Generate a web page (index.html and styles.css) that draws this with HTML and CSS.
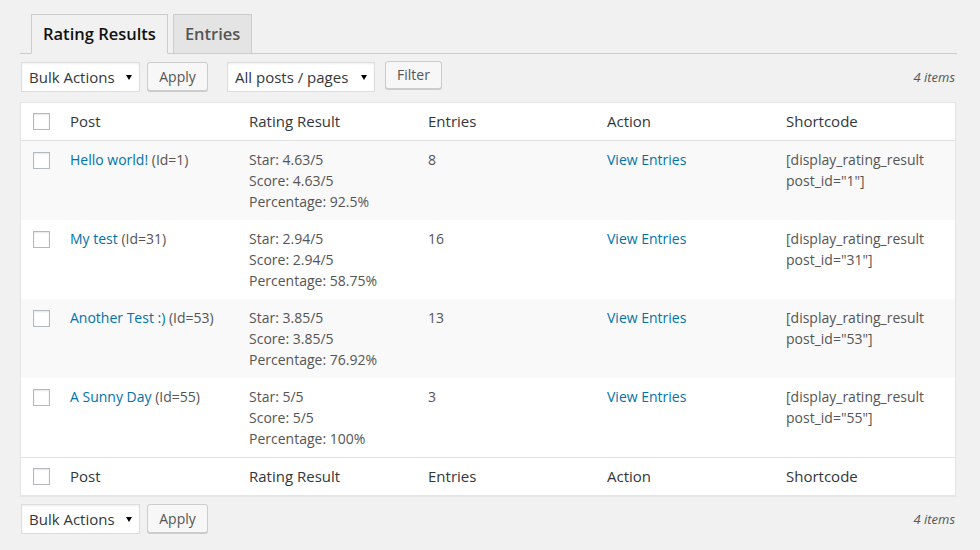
FILE: index.html
```html
<!DOCTYPE html>
<html lang="en">
<head>
<meta charset="utf-8">
<title>Rating Results</title>
<link rel="stylesheet" href="styles.css">
</head>
<body>
<div class="wrap">
  <div class="nav-tab-wrapper">
    <a class="nav-tab nav-tab-active" href="#">Rating Results</a>
    <a class="nav-tab" href="#">Entries</a>
  </div>

  <div class="tablenav top">
    <div class="actions">
      <div class="select select-bulk"><span>Bulk Actions</span><i class="caret"></i></div>
      <button class="button btn-apply" type="button">Apply</button>
    </div>
    <div class="actions actions-filter">
      <div class="select select-posts"><span>All posts / pages</span><i class="caret"></i></div>
      <button class="button btn-filter" type="button">Filter</button>
    </div>
    <div class="displaying-num">4 items</div>
  </div>

  <table class="widefat">
    <colgroup>
      <col class="col-cb">
      <col><col><col><col><col>
    </colgroup>
    <thead>
      <tr>
        <th class="check-column"><span class="checkbox"></span></th>
        <th>Post</th>
        <th>Rating Result</th>
        <th>Entries</th>
        <th>Action</th>
        <th>Shortcode</th>
      </tr>
    </thead>
    <tbody>
      <tr class="alternate">
        <td class="check-column"><span class="checkbox"></span></td>
        <td><a href="#">Hello world!</a> (Id=1)</td>
        <td>Star: 4.63/5<br>Score: 4.63/5<br>Percentage: 92.5%</td>
        <td>8</td>
        <td><a href="#">View Entries</a></td>
        <td>[display_rating_result post_id="1"]</td>
      </tr>
      <tr>
        <td class="check-column"><span class="checkbox"></span></td>
        <td><a href="#">My test</a> (Id=31)</td>
        <td>Star: 2.94/5<br>Score: 2.94/5<br>Percentage: 58.75%</td>
        <td>16</td>
        <td><a href="#">View Entries</a></td>
        <td>[display_rating_result post_id="31"]</td>
      </tr>
      <tr class="alternate">
        <td class="check-column"><span class="checkbox"></span></td>
        <td><a href="#">Another Test :)</a> (Id=53)</td>
        <td>Star: 3.85/5<br>Score: 3.85/5<br>Percentage: 76.92%</td>
        <td>13</td>
        <td><a href="#">View Entries</a></td>
        <td>[display_rating_result post_id="53"]</td>
      </tr>
      <tr>
        <td class="check-column"><span class="checkbox"></span></td>
        <td><a href="#">A Sunny Day</a> (Id=55)</td>
        <td>Star: 5/5<br>Score: 5/5<br>Percentage: 100%</td>
        <td>3</td>
        <td><a href="#">View Entries</a></td>
        <td>[display_rating_result post_id="55"]</td>
      </tr>
    </tbody>
    <tfoot>
      <tr>
        <th class="check-column"><span class="checkbox"></span></th>
        <th>Post</th>
        <th>Rating Result</th>
        <th>Entries</th>
        <th>Action</th>
        <th>Shortcode</th>
      </tr>
    </tfoot>
  </table>

  <div class="tablenav bottom">
    <div class="actions">
      <div class="select select-bulk"><span>Bulk Actions</span><i class="caret"></i></div>
      <button class="button btn-apply" type="button">Apply</button>
    </div>
    <div class="displaying-num">4 items</div>
  </div>
</div>
</body>
</html>
```
FILE: styles.css
```css
* { box-sizing: border-box; }

html, body {
  margin: 0;
  padding: 0;
  background: #f1f1f1;
}

body {
  font-family: "Open Sans", "Noto Sans", "Liberation Sans", sans-serif;
  font-size: 14px;
  color: #555;
}

.wrap {
  padding: 14px 23px 0 20px;
}

/* Tabs */
.nav-tab-wrapper {
  display: flex;
  align-items: flex-end;
  gap: 5px;
  padding-left: 11px;
  border-bottom: 1px solid #ccc;
}

.nav-tab {
  display: block;
  height: 39px;
  padding: 7px 11px;
  border: 1px solid #ccc;
  border-bottom: none;
  background: #e4e4e4;
  color: #555;
  font-size: 16.5px;
  font-weight: 600;
  line-height: 24px;
  text-decoration: none;
  white-space: nowrap;
}

.nav-tab-active {
  height: 40px;
  margin-bottom: -1px;
  background: #f1f1f1;
  border-bottom: 1px solid #f1f1f1;
  color: #111;
}

/* Table nav */
.tablenav {
  display: flex;
  align-items: flex-start;
  height: 30px;
}

.tablenav.top { margin-top: 8px; }
.tablenav.bottom { margin-top: 8px; }

.actions {
  display: flex;
  align-items: flex-start;
}

.actions + .actions { margin-left: 19px; }

.select {
  display: flex;
  align-items: center;
  justify-content: space-between;
  height: 30px;
  padding: 0 7px 0 7px;
  background: #fff;
  border: 1px solid #ddd;
  box-shadow: inset 0 1px 2px rgba(0, 0, 0, 0.07);
  color: #32373c;
  font-size: 15px;
  line-height: 28px;
}

.select-bulk { width: 119px; margin-left: 1px; }
.select-posts { width: 148px; }

.caret {
  display: block;
  width: 0;
  height: 0;
  border-top: 5px solid #000;
  border-left: 3px solid transparent;
  border-right: 3px solid transparent;
  margin-top: 1px;
}

.button {
  height: 29px;
  padding: 0 11px;
  background: #f7f7f7;
  border: 1px solid #ccc;
  border-radius: 3px;
  box-shadow: 0 1px 0 #ccc;
  color: #555;
  font-family: inherit;
  font-size: 14px;
  line-height: 26px;
  cursor: pointer;
}

.btn-apply { margin-left: 7px; width: 61px; }
.btn-filter { margin-left: 10px; width: 57px; height: 28px; margin-top: -1px; }

.displaying-num {
  margin-left: auto;
  padding-right: 2px;
  font-size: 13px;
  font-style: italic;
  color: #555;
  line-height: 30px;
}

/* Table */
.widefat {
  width: calc(100% - 1px);
  margin-top: 10px;
  table-layout: fixed;
  border-collapse: separate;
  border-spacing: 0;
  background: #fff;
  border: 1px solid #e5e5e5;
  box-shadow: 0 1px 1px rgba(0, 0, 0, 0.04);
}

.col-cb { width: 39px; }

.widefat th,
.widefat td {
  text-align: left;
  vertical-align: top;
  padding: 8px 10px;
  line-height: 21px;
}

.widefat th {
  font-weight: 400;
  font-size: 15px;
  color: #32373c;
}

.widefat thead th {
  border-bottom: 1px solid #e1e1e1;
}

.widefat tfoot th {
  border-top: 1px solid #e1e1e1;
}

.widefat td {
  font-size: 14px;
  color: #555;
}

.widefat tr.alternate td {
  background: #f9f9f9;
}

.widefat a {
  color: #0073aa;
  text-decoration: none;
}

.widefat .check-column {
  padding: 10px 0 0 12px;
}

.widefat td.check-column {
  padding-top: 11px;
}

.checkbox {
  display: block;
  width: 17px;
  height: 17px;
  background: #fff;
  border: 1px solid #b4b9be;
  box-shadow: inset 0 1px 2px rgba(0, 0, 0, 0.1);
}
```
